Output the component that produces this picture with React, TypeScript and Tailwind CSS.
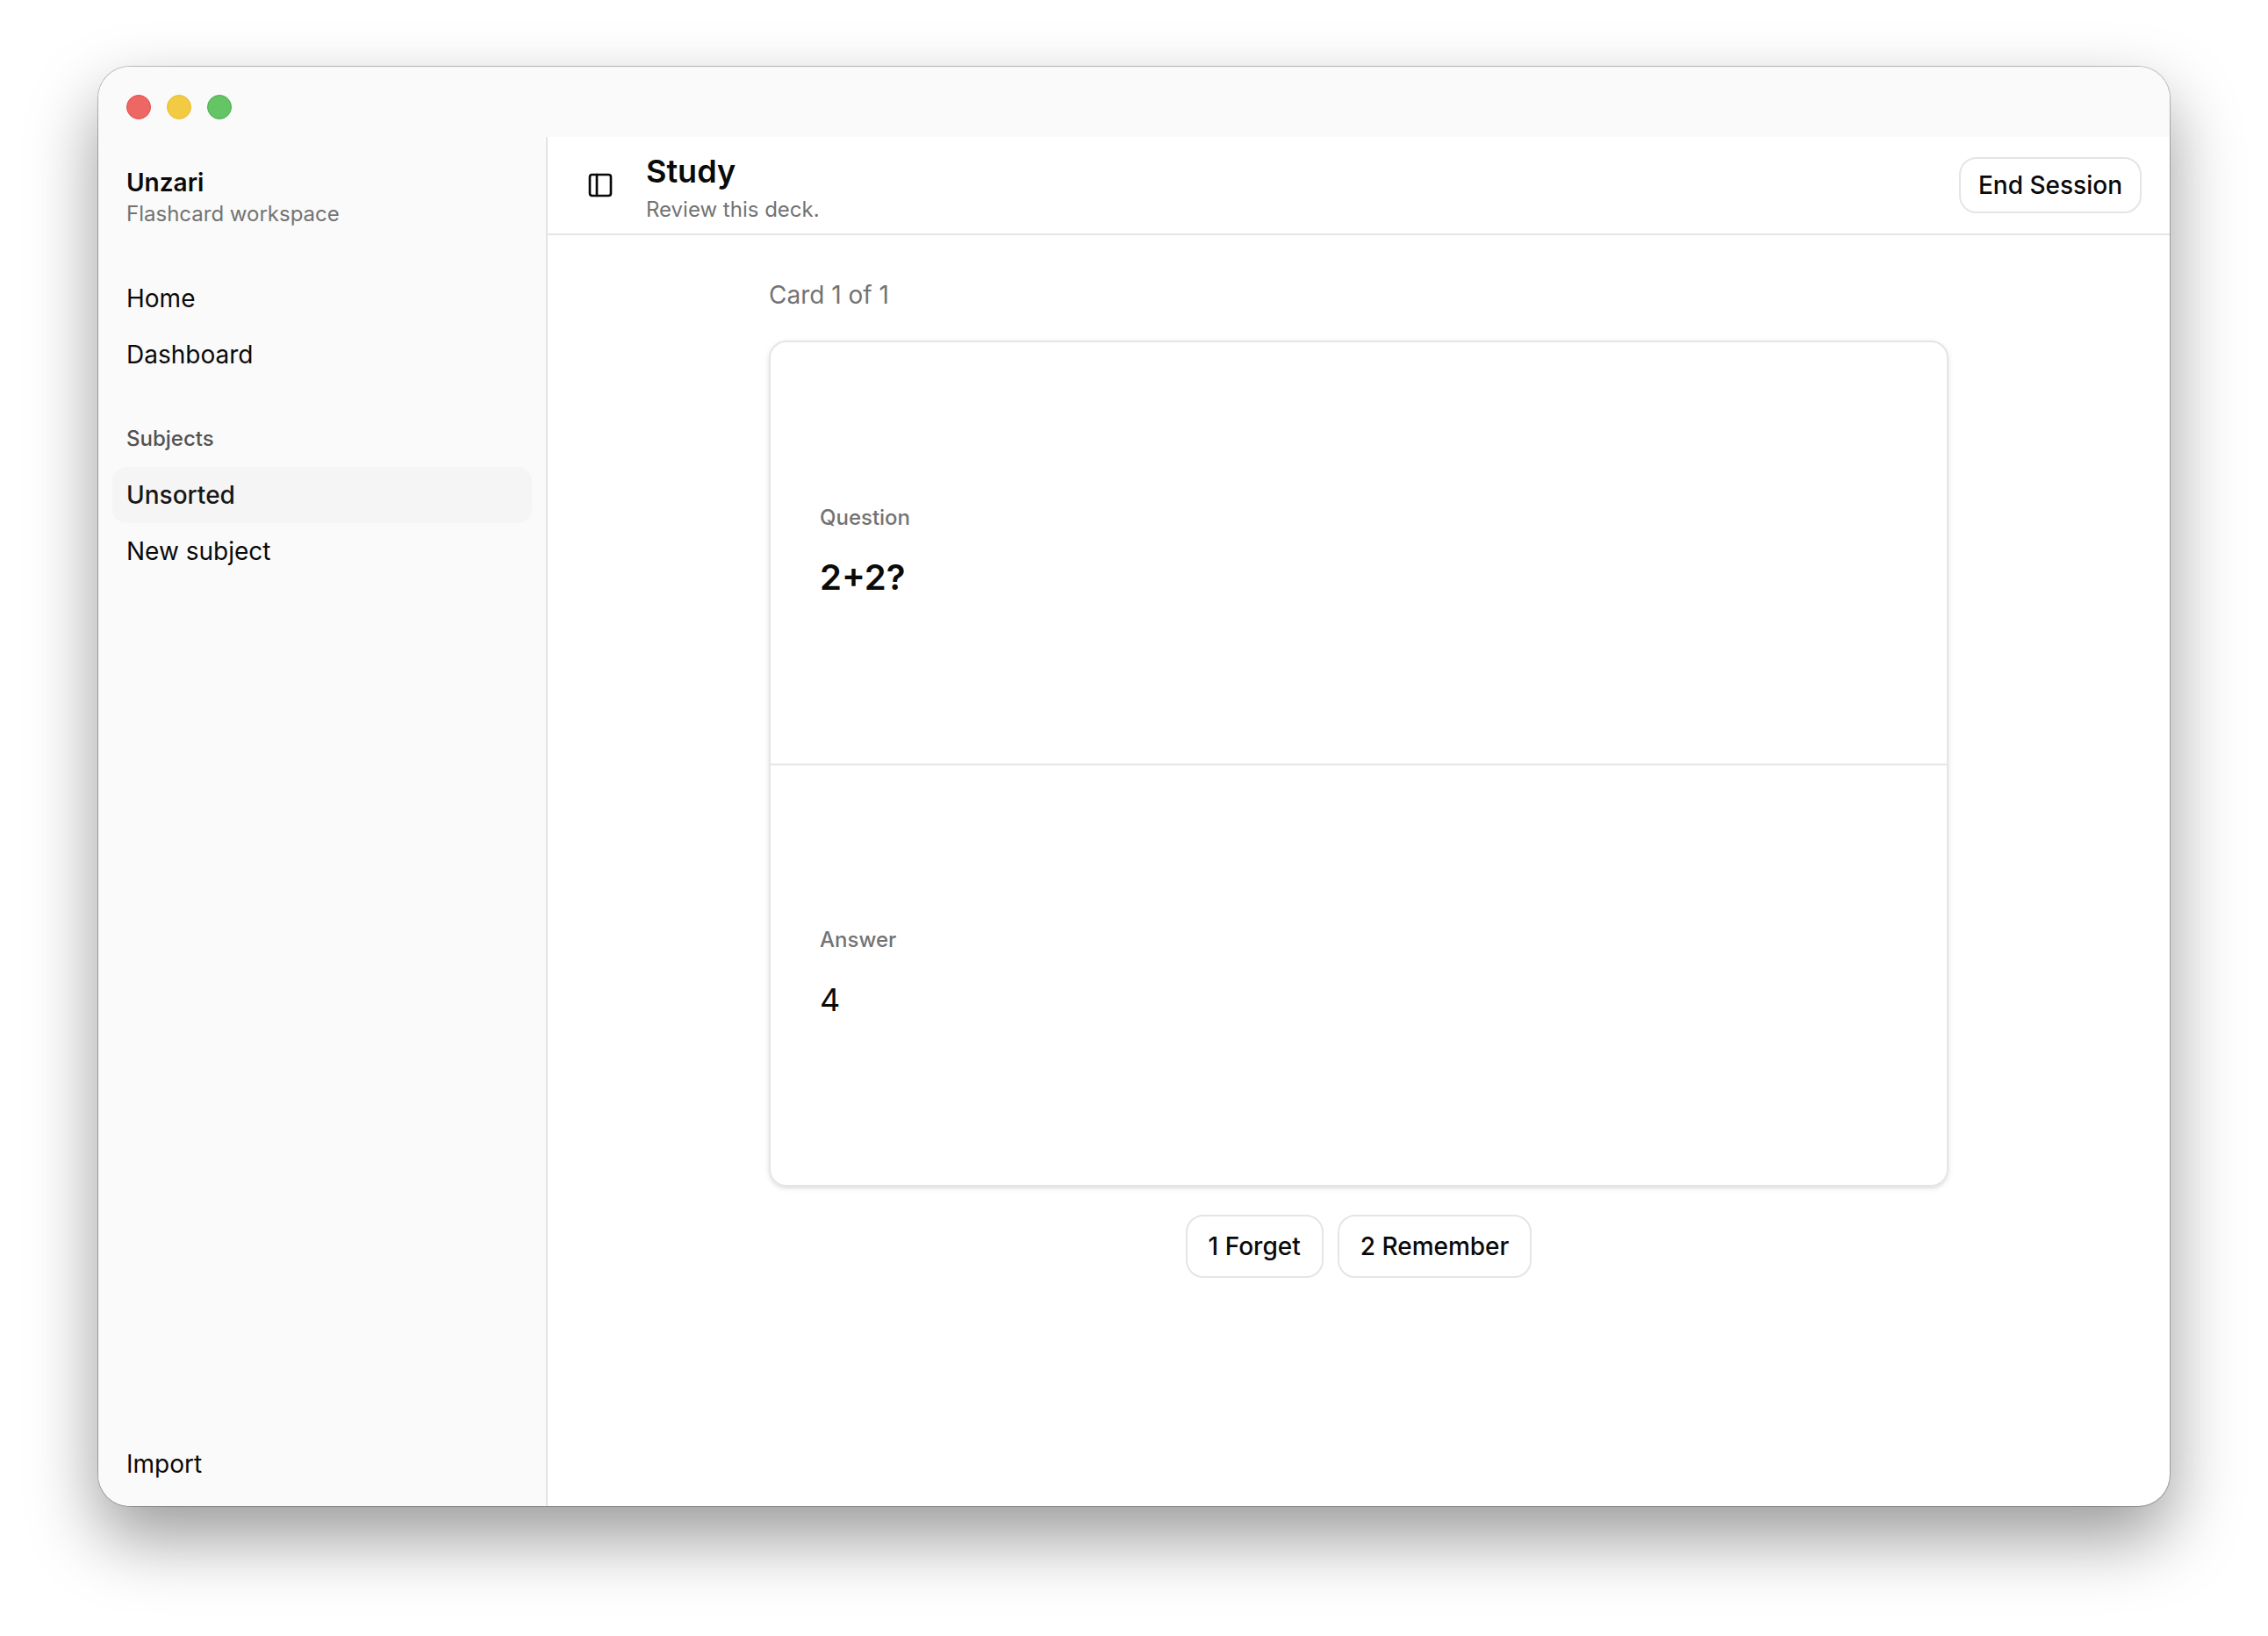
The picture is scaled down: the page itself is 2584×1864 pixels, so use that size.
import { clsx } from "clsx";
import { PanelLeft } from "lucide-react";
import { useState } from "react";

const mainLinks = ["Home", "Dashboard"];
const subjectLinks = ["Unsorted", "New subject"];

const outlineButton = "rounded-[20px] border-2 border-neutral-200 bg-white text-[28px] leading-10 font-medium";

function NavLink({ label, active, onSelect }: { label: string; active?: boolean; onSelect: (label: string) => void }) {
  return (
    <a
      href="#"
      aria-current={active ? "page" : undefined}
      className={clsx(
        "flex h-16 items-center rounded-2xl px-4 text-[28px] leading-10",
        active && "bg-neutral-100 font-medium text-neutral-900"
      )}
      onClick={(e) => {
        e.preventDefault();
        onSelect(label);
      }}
    >
      {label}
    </a>
  );
}

function Sidebar() {
  const [current, setCurrent] = useState("Unsorted");

  return (
    <aside className="flex w-[512px] shrink-0 flex-col border-r-2 border-neutral-200 bg-neutral-50 p-4">
      <div className="px-4 pt-4">
        <p className="text-[28px] leading-10 font-semibold">Unzari</p>
        <p className="text-2xl text-neutral-500">Flashcard workspace</p>
      </div>
      <nav className="mt-12 flex flex-1 flex-col">
        {mainLinks.map((label) => (
          <NavLink key={label} label={label} active={current === label} onSelect={setCurrent} />
        ))}
        <h2 className="mt-8 flex h-16 items-center px-4 text-2xl font-medium text-[#535353]">Subjects</h2>
        {subjectLinks.map((label) => (
          <NavLink key={label} label={label} active={current === label} onSelect={setCurrent} />
        ))}
        <div className="mt-auto">
          <NavLink label="Import" active={current === "Import"} onSelect={setCurrent} />
        </div>
      </nav>
    </aside>
  );
}

export default function App() {
  const [sidebarOpen, setSidebarOpen] = useState(true);

  return (
    <div className="flex min-h-screen bg-white px-28 pt-[76px] pb-[148px] font-['Inter',sans-serif] text-neutral-950">
      <div className="flex flex-1 flex-col overflow-hidden rounded-[36px] bg-white shadow-[0_0_0_1px_rgba(0,0,0,0.24),0_36px_80px_rgba(0,0,0,0.4)]">
        <div className="flex h-20 items-center gap-[18px] bg-neutral-50 px-8 pt-8 pb-5">
          <button aria-label="Close" className="size-7 rounded-full border border-[#e24b4b] bg-[#ed6765]" />
          <button aria-label="Minimize" className="size-7 rounded-full border border-[#e9bc2c] bg-[#f3ca44]" />
          <button aria-label="Zoom" className="size-7 rounded-full border border-[#45b045] bg-[#65c466]" />
        </div>
        <div className="flex flex-1">
          {sidebarOpen && <Sidebar />}
          <div className="flex min-w-0 flex-1 flex-col">
            <header className="flex h-28 items-center gap-6 border-b-2 border-neutral-200 px-8">
              <button
                aria-label="Toggle sidebar"
                className="flex size-14 items-center justify-center rounded-2xl"
                onClick={() => setSidebarOpen((open) => !open)}
              >
                <PanelLeft className="size-8" />
              </button>
              <div className="flex-1">
                <h1 className="text-[36px] leading-14 font-semibold">Study</h1>
                <p className="text-2xl text-neutral-500">Review this deck.</p>
              </div>
              <button className={clsx(outlineButton, "h-16 px-5")}>End Session</button>
            </header>
            <main className="flex-1 p-12">
              <div className="mx-auto flex max-w-[1344px] flex-col gap-8">
                <p className="text-[28px] leading-10 text-neutral-500">Card 1 of 1</p>
                <article className="overflow-hidden rounded-[20px] border-2 border-neutral-200 shadow-[0_2px_6px_rgba(0,0,0,0.1),0_2px_4px_-2px_rgba(0,0,0,0.1)]">
                  <section className="flex min-h-[480px] flex-col justify-center gap-6 px-14">
                    <h2 className="text-2xl font-medium text-neutral-500">Question</h2>
                    <p className="text-[40px] leading-14 font-semibold">2+2?</p>
                  </section>
                  <section className="flex min-h-[480px] flex-col justify-center gap-6 border-t-2 border-neutral-200 px-14">
                    <h2 className="text-2xl font-medium text-neutral-500">Answer</h2>
                    <p className="text-[36px] leading-14">4</p>
                  </section>
                </article>
                <div className="flex justify-center gap-4">
                  <button className={clsx(outlineButton, "h-[72px] px-6")}>1 Forget</button>
                  <button className={clsx(outlineButton, "h-[72px] px-6")}>2 Remember</button>
                </div>
              </div>
            </main>
          </div>
        </div>
      </div>
    </div>
  );
}
